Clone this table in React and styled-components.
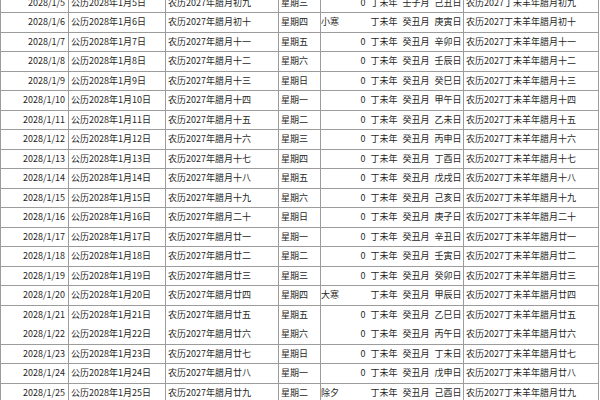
import React from "react";
import styled, { createGlobalStyle } from "styled-components";

const Global = createGlobalStyle`
  html, body { margin: 0; padding: 0; background: #fff; overflow: hidden; }
  body { font-family: "Noto Sans CJK SC", "Noto Sans", sans-serif; }
`;

const Sheet = styled.div`
  width: 600px;
  height: 400px;
  overflow: hidden;
`;

const Table = styled.table`
  border-collapse: collapse;
  table-layout: fixed;
  width: 598px;
  margin-top: -7px;
  font-family: "Noto Sans CJK SC", "Noto Sans", sans-serif;
  font-size: 9px;
  color: #1f1f1f;
`;

const Col = styled.col`
  width: ${(p) => p.$w}px;
`;

const Row = styled.tr`
  height: 19.5px;
  border-bottom: 1px solid ${(p) => (p.$noLine ? "transparent" : "#9c9c9c")};
`;

const Cell = styled.td`
  padding: 0 ${(p) => (p.$right ? "3px" : "0")} 0 ${(p) => (p.$right ? "0" : "2px")};
  text-align: ${(p) => (p.$right ? "right" : "left")};
  white-space: nowrap;
  overflow: hidden;
  vertical-align: middle;
  line-height: 12px;
  border-left: ${(p) => (p.$open ? "none" : "1px solid #9c9c9c")};
  border-right: ${(p) => (p.$openRight ? "none" : "1px solid #9c9c9c")};
`;

const Term = styled.span`
  float: left;
`;

const Ganzhi = styled.span`
  word-spacing: 3px;
`;

const widths = [68, 97, 113, 42, 48, 95, 135];
const cn = ["一", "二", "三", "四", "五", "六", "日"];
const lunarNames = [
  "初九", "初十", "十一", "十二", "十三", "十四", "十五", "十六", "十七", "十八",
  "十九", "二十", "廿一", "廿二", "廿三", "廿四", "廿五", "廿六", "廿七", "廿八", "廿九",
];
const days = [
  "己丑", "庚寅", "辛卯", "壬辰", "癸巳", "甲午", "乙未", "丙申", "丁酉", "戊戌",
  "己亥", "庚子", "辛丑", "壬寅", "癸卯", "甲辰", "乙巳", "丙午", "丁未", "戊申", "己酉",
];
const terms = { 6: "小寒", 20: "大寒", 25: "除夕" };

const rows = lunarNames.map((ln, i) => {
  const d = 5 + i;
  return {
    d,
    lunar: ln,
    week: "星期" + cn[(2 + i) % 7],
    term: terms[d] || "",
    month: d === 5 ? "壬子月" : "癸丑月",
    day: days[i],
  };
});

export default function App() {
  return (
    <Sheet>
      <Global />
      <Table>
        <colgroup>
          {widths.map((w, i) => (
            <Col key={i} $w={w} />
          ))}
        </colgroup>
        <tbody>
          {rows.map((r) => (
            <Row key={r.d} $noLine={r.d === 21}>
              <Cell $right>{`2028/1/${r.d}`}</Cell>
              <Cell>{`公历2028年1月${r.d}日`}</Cell>
              <Cell>{`农历2027年腊月${r.lunar}`}</Cell>
              <Cell>{r.week}</Cell>
              <Cell $right $openRight>
                {r.term ? <Term>{r.term}</Term> : "0"}
              </Cell>
              <Cell $open>
                <Ganzhi>{`丁未年 ${r.month} ${r.day}日`}</Ganzhi>
              </Cell>
              <Cell>{`农历2027丁未羊年腊月${r.lunar}`}</Cell>
            </Row>
          ))}
        </tbody>
      </Table>
    </Sheet>
  );
}
